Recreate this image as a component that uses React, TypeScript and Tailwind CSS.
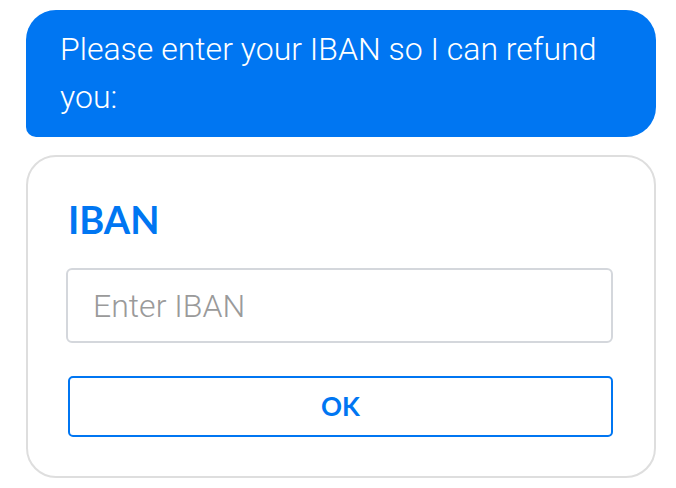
export default function App() {
  return (
    <div className="w-[676px] h-[488px] bg-white pl-[26px] pr-[20px] pt-[10px] flex flex-col" style={{ fontFamily: "Roboto, sans-serif" }}>
      <div className="bg-[#0076f2] rounded-[30px] rounded-bl-[10px] pl-[34px] pr-[30px] pt-[15px] pb-[16px] text-white text-[32px] font-light leading-[48px]">
        Please enter your IBAN so I can refund you:
      </div>
      <div className="mt-[18px] border-2 border-[#dedede] rounded-[30px] pl-[40px] pr-[41px] pt-[43px] pb-[39px] flex flex-col">
        <div className="text-[38px] leading-[38px] font-bold text-[#0076f2]" style={{ fontFamily: "Lato, sans-serif" }}>IBAN</div>
        <input
          className="mt-[30px] -ml-[2px] h-[75px] border-2 border-[#d4d7dc] rounded-[6px] pl-[25px] text-[32px] font-light text-gray-700 placeholder:text-[#9a9a9a] outline-none"
          placeholder="Enter IBAN"
        />
        <button className="mt-[33px] h-[61px] border-2 border-[#0076f2] rounded-[5px] text-[#0076f2] text-[26px] font-bold" style={{ fontFamily: "Lato, sans-serif" }}>
          OK
        </button>
      </div>
    </div>
  );
}
